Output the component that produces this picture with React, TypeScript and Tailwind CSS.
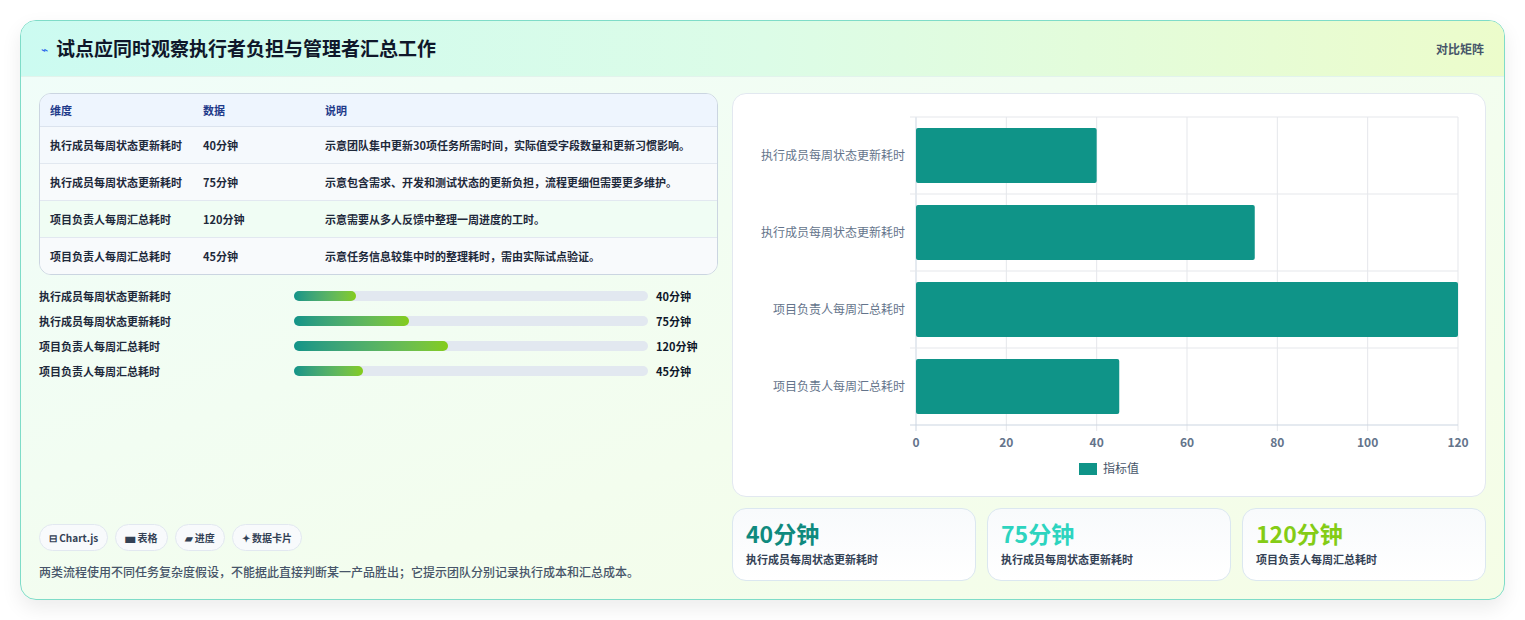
import React from "react";

const rows = [
  ["执行成员每周状态更新耗时", "40分钟", "示意团队集中更新30项任务所需时间，实际值受字段数量和更新习惯影响。"],
  ["执行成员每周状态更新耗时", "75分钟", "示意包含需求、开发和测试状态的更新负担，流程更细但需要更多维护。"],
  ["项目负责人每周汇总耗时", "120分钟", "示意需要从多人反馈中整理一周进度的工时。"],
  ["项目负责人每周汇总耗时", "45分钟", "示意任务信息较集中时的整理耗时，需由实际试点验证。"],
];
const vals = [40, 75, 120, 45];
const pct = ["17.5%", "32.5%", "43.5%", "19.5%"];

function Chart() {
  const x0 = 183, w = 542, y0 = 23, bh = 77;
  const sx = (v: number) => x0 + (v / 120) * w;
  return (
    <svg width="752" height="404" className="block">
      {[0, 20, 40, 60, 80, 100, 120].map((t) => (
        <g key={t}>
          <line x1={sx(t)} x2={sx(t)} y1={y0} y2={337} stroke={t === 0 ? "#cbd5e1" : "#e5e7eb"} />
          <text x={sx(t)} y={353} textAnchor="middle" fontSize="12" fill="#64748b" fontWeight="600">{t}</text>
        </g>
      ))}
      {[0, 1, 2, 3, 4].map((i) => (
        <line key={i} x1={177} x2={x0 + w} y1={y0 + i * bh} y2={y0 + i * bh} stroke={i === 4 ? "#cbd5e1" : "#e5e7eb"} />
      ))}
      {vals.map((v, i) => (
        <g key={i}>
          <rect x={x0} y={y0 + i * bh + 11} width={sx(v) - x0} height={55} rx="2" fill="#0f9488" />
          <text x={172} y={y0 + i * bh + 43} textAnchor="end" fontSize="12" fill="#64748b">{rows[i][0]}</text>
        </g>
      ))}
      <rect x={346} y={369} width={18} height={12} fill="#0f9488" />
      <text x={370} y={379} fontSize="12" fill="#475569">指标值</text>
    </svg>
  );
}

export default function App() {
  return (
    <div className="w-[1525px] h-[620px] bg-white pt-[20px] px-[20px]" style={{ fontFamily: '"Noto Sans CJK SC", "Noto Sans", sans-serif' }}>
      <div className="h-[580px] rounded-[16px] border border-[#7fdcc8] overflow-hidden bg-gradient-to-br from-[#f0fdfa] to-[#f5fde6] shadow-[0_8px_20px_rgba(0,0,0,0.08)] flex flex-col">
        <div className="h-[56px] shrink-0 flex items-center justify-between px-[20px] bg-gradient-to-r from-[#ccfbf1] via-[#dcfce7] to-[#ecfccb] border-b border-[#e2f3ec]">
          <div className="flex items-center gap-[8px]">
            <span className="text-[12px] text-[#2563eb]">⌁</span>
            <span className="text-[19px] font-bold text-[#0f172a]">试点应同时观察执行者负担与管理者汇总工作</span>
          </div>
          <span className="text-[12px] font-semibold text-[#475569]">对比矩阵</span>
        </div>
        <div className="flex-1 flex gap-[14px] px-[18px] pt-[16px] pb-[18px]">
          <div className="w-[681px] flex flex-col">
            <div className="rounded-[12px] border border-[#cbd5e1] overflow-hidden bg-[#f8fafc] text-[11px] text-[#1e293b] font-semibold">
              <div className="flex h-[33px] items-center bg-[#eef5fe] border-b border-[#dbe3ee] text-[#1e3a8a]">
                <div className="w-[163px] pl-[10px]">维度</div>
                <div className="w-[122px]">数据</div>
                <div className="flex-1">说明</div>
              </div>
              {rows.map((r, i) => (
                <div key={i} className={`flex py-[9px] leading-[18px] ${i > 0 ? "border-t border-[#e2e8f0]" : ""} ${i === 2 ? "bg-[#f0fdf4]" : i % 2 ? "bg-[#f8fafc]" : "bg-[#f5f9fd]"}`}>
                  <div className="w-[163px] pl-[10px]">{r[0]}</div>
                  <div className="w-[122px]">{r[1]}</div>
                  <div className="flex-1 pr-[8px]">{r[2]}</div>
                </div>
              ))}
            </div>
            <div className="mt-[12px] flex flex-col gap-[7px]">
              {rows.map((r, i) => (
                <div key={i} className="flex items-center h-[18px] text-[11px] font-semibold text-[#1e293b]">
                  <div className="w-[255px]">{r[0]}</div>
                  <div className="w-[354px] h-[10px] rounded-full bg-[#e2e8f0]">
                    <div className="h-full rounded-full bg-gradient-to-r from-[#0f9488] to-[#84cc16]" style={{ width: pct[i] }} />
                  </div>
                  <div className="ml-[8px] text-[#0f172a] font-bold">{r[1]}</div>
                </div>
              ))}
            </div>
            <div className="mt-auto flex gap-[7px] text-[10px] font-bold text-[#334155]">
              {["⊟ Chart.js", "▅ 表格", "▰ 进度", "✦ 数据卡片"].map((c) => (
                <span key={c} className="h-[27px] px-[9px] flex items-center rounded-full bg-[#f8fafc] border border-[#e2e8f0]">{c}</span>
              ))}
            </div>
            <div className="mt-[12px] text-[12px] text-[#475569] font-medium">两类流程使用不同任务复杂度假设，不能据此直接判断某一产品胜出；它提示团队分别记录执行成本和汇总成本。</div>
          </div>
          <div className="flex-1 flex flex-col gap-[11px]">
            <div className="h-[404px] rounded-[14px] bg-white border border-[#e2e8f0]">
              <Chart />
            </div>
            <div className="flex gap-[11px]">
              {[["40分钟", "text-[#0f8a7e]", rows[0][0]], ["75分钟", "text-[#2dd4bf]", rows[1][0]], ["120分钟", "text-[#84cc16]", rows[2][0]]].map((k, i) => (
                <div key={i} className="flex-1 h-[73px] rounded-[14px] border border-[#dbe7f0] bg-gradient-to-b from-[#f8fafc] to-white px-[13px] pt-[8px]">
                  <div className={`text-[23px] font-bold leading-[32px] ${k[1]}`}>{k[0]}</div>
                  <div className="text-[11px] font-semibold text-[#334155] mt-[2px]">{k[2]}</div>
                </div>
              ))}
            </div>
          </div>
        </div>
      </div>
    </div>
  );
}
